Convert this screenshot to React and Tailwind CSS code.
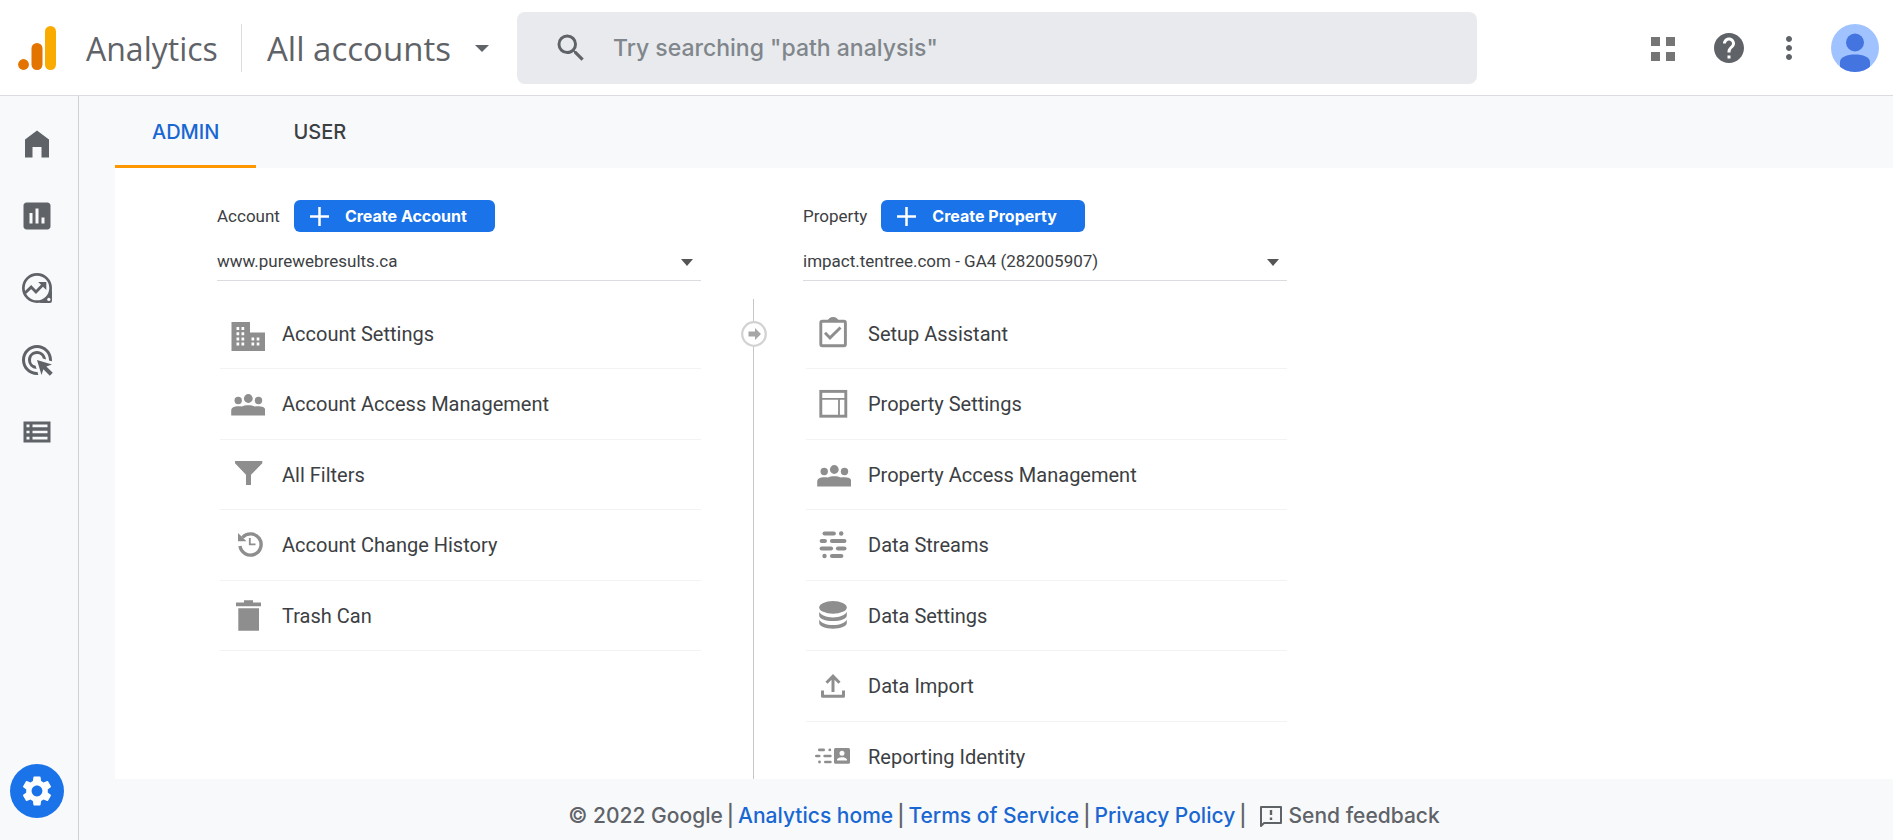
import React, { useState } from 'react';
import { MdAdsClick, MdHelp, MdInsertChart, MdMoreVert, MdSearch, MdSettings } from 'react-icons/md';

// --- Sidebar icons ---
const HomeIcon = () => (
  <svg className="size-9" viewBox="0 0 24 24" fill="currentColor">
    <path d="M4 9v12h5v-7h6v7h5V9l-8-6z" />
  </svg>
);

const ExploreIcon = () => (
  <svg className="size-9" viewBox="0 0 24 24" fill="none" stroke="currentColor">
    <path d="M22 12v8.5a1.5 1.5 0 0 1-1.5 1.5H12a12 12 0 0 0 10-10z" fill="currentColor" stroke="none" />
    <circle cx="12" cy="12" r="9.1" strokeWidth="1.8" />
    <path d="M4 15.3l4.1-3.9 3.2 3.3 4.8-5" strokeWidth="1.9" />
    <path d="M12.8 8h5.4v5.4z" fill="currentColor" stroke="none" />
    <circle cx="19.9" cy="19.6" r="1.1" fill="#f8f9fb" stroke="none" />
  </svg>
);

const ListIcon = () => (
  <svg className="size-9" viewBox="0 0 24 24" fill="currentColor" fillRule="evenodd">
    <path d="M3 5h18v14H3zM5 7v1.8h2V7zM5 11.1v1.8h2v-1.8zM5 15.2V17h2v-1.8zM9 7v1.8h10V7zM9 11.1v1.8h10v-1.8zM9 15.2V17h10v-1.8z" />
  </svg>
);

// --- Admin list icons, all drawn on a 36x36 box ---
const BuildingIcon = () => (
  <g transform="translate(2 6)">
    <path
      fillRule="evenodd"
      d="M.5 0H19v10.500h15V29H.5zM5.500 5v3h2.700V5zM10.500 5v3h2.700V5zM5.500 10.200v3h2.700v-3zM10.500 10.200v3h2.700v-3zM5.500 15.400v3h2.700v-3zM10.500 15.400v3h2.700v-3zM5.500 20.600v3h2.700v-3zM10.500 20.600v3h2.700v-3zM20.500 15.400v3h2.700v-3zM25.700 15.400v3h2.700v-3zM20.500 20.600v3h2.700v-3zM25.700 20.600v3h2.700v-3z"
    />
  </g>
);

const PeopleIcon = () => (
  <g transform="translate(2 8)">
    <circle cx="17.300" cy="4.500" r="4.400" />
    <circle cx="7.200" cy="6.500" r="3.700" />
    <circle cx="27.500" cy="6.500" r="3.700" />
    <path d="M.2 21.600v-5.200c0-2.900 3.300-4.200 7-4.200 1.500 0 2.500.1 3.700.4 1.500-.9 3.900-1.300 6.400-1.300s4.900.4 6.400 1.300c1.200-.3 2.300-.4 3.800-.4 3.700 0 7 1.300 7 4.200v5.200z" />
  </g>
);

const FunnelIcon = () => (
  <g transform="translate(6 4)">
    <path d="M0 0h27.300v2.200L16 13.800V24h-5V13.800L0 2.200z" />
  </g>
);

const HistoryIcon = () => (
  <g transform="translate(9 4)">
    <path d="M4.500 6.500A10.600 10.600 0 1 1 2 15" fill="none" stroke="currentColor" strokeWidth="3.400" />
    <path d="M0 2l8.500 8.300H0z" />
    <path d="M11.800 7v6.300h5.700" fill="none" stroke="currentColor" strokeWidth="1.800" />
  </g>
);

const TrashIcon = () => (
  <g transform="translate(7 2)">
    <path d="M0 2.500h8V.3h9v2.200h8v3.700H0zM2.300 8.300h20.700v22.400H2.300z" />
  </g>
);

const ClipboardIcon = () => (
  <g transform="translate(4 1)" fill="none" stroke="currentColor">
    <rect x="1.800" y="4.200" width="24.600" height="24.600" rx="1.500" strokeWidth="2.900" />
    <path d="M10 4.500a4.100 3 0 0 1 8.200 0" strokeWidth="2.900" />
    <path d="M6 15.700l5 5.200 10.500-10.400" strokeWidth="2.900" />
  </g>
);

const LayoutIcon = () => (
  <g transform="translate(4 4)" fill="none" stroke="currentColor">
    <rect x="1.800" y="1.400" width="25" height="24.800" strokeWidth="2.900" />
    <path d="M2 8.900h25M20 8.900V26" strokeWidth="1.800" />
  </g>
);

const StreamsIcon = () => (
  <g transform="translate(4 4)">
    <rect x="3.500" y=".4" width="13.400" height="4.200" rx="2.100" />
    <circle cx="22.200" cy="2.500" r="2.200" />
    <rect x=".6" y="7.900" width="7.400" height="4.200" rx="2.100" />
    <rect x="10.900" y="7.900" width="16.600" height="4.200" rx="2.100" />
    <rect x=".6" y="15.400" width="13.500" height="4.200" rx="2.100" />
    <rect x="16.900" y="15.400" width="10.600" height="4.200" rx="2.100" />
    <circle cx="5.500" cy="25" r="2.200" />
    <rect x="10.900" y="22.900" width="13.500" height="4.200" rx="2.100" />
  </g>
);

const DatabaseIcon = () => (
  <g transform="translate(4 3)">
    <ellipse cx="14" cy="6.400" rx="13.800" ry="6.300" />
    <path d="M.2 10.800c1.500 3.300 7 5.600 13.800 5.600s12.300-2.300 13.800-5.600v3.600c0 3.200-6.200 5.600-13.800 5.600S.2 17.600.2 14.400z" />
    <path d="M.2 18.400c1.500 3.300 7 5.600 13.800 5.600s12.300-2.300 13.800-5.600V22c0 3.200-6.200 5.700-13.800 5.700S.2 25.200.2 22z" />
  </g>
);

const ImportIcon = () => (
  <g transform="translate(6 6)" fill="none" stroke="currentColor" strokeWidth="3">
    <path d="M12 18V2.500M5.500 8.700L12 2.200l6.500 6.500" />
    <path d="M1.500 16.500v5.700h21v-5.700" strokeLinejoin="round" />
  </g>
);

const IdentityIcon = () => (
  <g transform="translate(0 9)">
    <rect x="3" y=".6" width="7" height="2.600" rx="1.300" />
    <circle cx="14.800" cy="1.900" r="1.400" />
    <rect x="0" y="6.700" width="5.500" height="2.600" rx="1.300" />
    <rect x="8.300" y="6.700" width="8.400" height="2.600" rx="1.300" />
    <circle cx="4.500" cy="14" r="1.400" />
    <rect x="9" y="12.700" width="7.700" height="2.600" rx="1.300" />
    <path
      fillRule="evenodd"
      d="M20.500 0h13a1.500 1.500 0 0 1 1.500 1.500v12.700a1.500 1.500 0 0 1-1.500 1.500h-13a1.500 1.500 0 0 1-1.500-1.500V1.500A1.500 1.500 0 0 1 20.500 0zM27 2.800a2.500 2.500 0 1 0 0 5 2.500 2.500 0 0 0 0-5zM22 12.600h10v-.8c0-1.800-3.300-2.600-5-2.600s-5 .8-5 2.600z"
    />
  </g>
);

const navItems = [
  { label: 'Home', icon: <HomeIcon /> },
  { label: 'Reports', icon: <MdInsertChart className="size-9" /> },
  { label: 'Explore', icon: <ExploreIcon /> },
  { label: 'Advertising', icon: <MdAdsClick className="size-9" /> },
  { label: 'Configure', icon: <ListIcon /> },
];

const accountItems = [
  { label: 'Account Settings', Icon: BuildingIcon },
  { label: 'Account Access Management', Icon: PeopleIcon },
  { label: 'All Filters', Icon: FunnelIcon },
  { label: 'Account Change History', Icon: HistoryIcon },
  { label: 'Trash Can', Icon: TrashIcon },
];

const propertyItems = [
  { label: 'Setup Assistant', Icon: ClipboardIcon },
  { label: 'Property Settings', Icon: LayoutIcon },
  { label: 'Property Access Management', Icon: PeopleIcon },
  { label: 'Data Streams', Icon: StreamsIcon },
  { label: 'Data Settings', Icon: DatabaseIcon },
  { label: 'Data Import', Icon: ImportIcon },
  { label: 'Reporting Identity', Icon: IdentityIcon },
];

function Header() {
  return (
    <header className="flex h-24 shrink-0 items-center border-b border-[#dadce0] bg-white pl-[18px] pr-[14px] text-[#5f6368]">
      <svg className="h-11 w-[38px] shrink-0" viewBox="0 0 38 44">
        <rect x="27" y="0" width="11" height="44" rx="5.500" fill="#f9ab00" />
        <rect x="13.500" y="17" width="11" height="27" rx="5.500" fill="#e37400" />
        <circle cx="5.500" cy="38.500" r="5.400" fill="#e37400" />
      </svg>
      <span className="ml-[30px] w-[155px] shrink-0 pt-0.5 font-['Open_Sans','Noto_Sans',sans-serif] text-[32px]">Analytics</span>
      <div className="h-12 w-px bg-[#dadce0]" />
      <button className="flex w-[275px] shrink-0 items-center gap-6 pl-[25px] pt-0.5 text-left font-['Open_Sans','Noto_Sans',sans-serif] text-[33px]">
        All accounts
        <svg className="h-[7px] w-[14px]" viewBox="0 0 14 7" fill="currentColor">
          <path d="M0 0h14L7 7z" />
        </svg>
      </button>

      <label className="flex h-[72px] min-w-0 max-w-[960px] flex-1 items-center gap-6 rounded-lg bg-[#e8eaed] pl-9">
        <MdSearch className="size-9 shrink-0" />
        <input
          type="text"
          aria-label="Search"
          placeholder={'Try searching "path analysis"'}
          className="min-w-0 flex-1 bg-transparent pt-0.5 text-[23px] font-medium placeholder-[#80868b] outline-none"
        />
      </label>

      <div className="ml-auto flex items-center gap-6 pl-6">
        <button aria-label="Apps" className="mr-[6px] text-[#757575]">
          <svg className="size-9" viewBox="0 0 36 36" fill="currentColor">
            <path d="M6 7h9v9H6zM21 7h9v9h-9zM6 22h9v9H6zM21 22h9v9h-9z" />
          </svg>
        </button>
        <button aria-label="Help">
          <MdHelp className="size-9" />
        </button>
        <button aria-label="More options">
          <MdMoreVert className="size-9" />
        </button>
        <button aria-label="Profile">
          <svg className="size-12" viewBox="0 0 48 48">
            <clipPath id="avatar">
              <circle cx="24" cy="24" r="24" />
            </clipPath>
            <g clipPath="url(#avatar)">
              <path d="M0 0h48v48H0z" fill="#a0c3ff" />
              <circle cx="24" cy="18.500" r="9" fill="#4374e0" />
              <path d="M9 48V38c0-5 7-7.500 15-7.500S39 33 39 38v10z" fill="#4374e0" />
            </g>
          </svg>
        </button>
      </div>
    </header>
  );
}

function Sidebar() {
  return (
    <nav className="flex w-[79px] shrink-0 flex-col items-center border-r border-[#cfd1d4] pb-[22px] pr-1 pt-[30px] text-[#5f6368]">
      <div className="flex flex-col gap-9">
        {navItems.map((item) => (
          <a key={item.label} href="#" aria-label={item.label}>
            {item.icon}
          </a>
        ))}
      </div>
      <button aria-label="Admin" className="mt-auto flex size-[54px] items-center justify-center rounded-full bg-[#1a73e8] text-white">
        <MdSettings className="size-9" />
      </button>
    </nav>
  );
}

function AdminColumn({ id, title, value, items }) {
  return (
    <section className="w-[484px] shrink">
      <div className="flex items-center gap-[14px]">
        <label htmlFor={id} className="pt-0.5 text-[17px] text-[#3c4043]">{title}</label>
        <button className="flex h-8 items-center gap-4 rounded-md bg-[#1a73e8] pl-4 pr-7 font-['Inter','Noto_Sans',sans-serif] text-base font-bold text-white">
          <svg className="size-[19px]" viewBox="0 0 19 19" fill="none" stroke="currentColor" strokeWidth="2.500">
            <path d="M9.500 0v19M0 9.500h19" />
          </svg>
          Create {title}
        </button>
      </div>

      <div className="relative mt-3 border-b border-[#dadce0]">
        <select id={id} className="h-9 w-full appearance-none bg-transparent text-[17px] text-[#3c4043] outline-none">
          <option>{value}</option>
        </select>
        <svg className="pointer-events-none absolute right-2 top-[15px] h-[7px] w-3 text-[#555]" viewBox="0 0 12 7" fill="currentColor">
          <path d="M0 0h12L6 7z" />
        </svg>
      </div>

      <ul className="mt-[18px] pl-[3px]">
        {items.map(({ label, Icon }) => (
          <li key={label} className="border-b border-[#f1f3f4] odd:h-[70px] even:h-[71px]">
            <a href="#" className="flex h-full items-center gap-2 text-xl text-[#3c4043]">
              <span className="flex w-[54px] shrink-0 justify-center text-[#8e8e8e]">
                <svg className="size-9" viewBox="0 0 36 36" fill="currentColor">
                  <Icon />
                </svg>
              </span>
              {label}
            </a>
          </li>
        ))}
      </ul>
    </section>
  );
}

function Footer() {
  return (
    <footer className="flex h-[61px] shrink-0 items-center justify-center gap-1 pt-3 text-[21px] font-medium text-[#5f6368]">
      <span>© 2022 Google</span>
      <span>|</span>
      <a href="#" className="text-[#1967d2]">Analytics home</a>
      <span>|</span>
      <a href="#" className="text-[#1967d2]">Terms of Service</a>
      <span>|</span>
      <a href="#" className="text-[#1967d2]">Privacy Policy</a>
      <span>|</span>
      <button className="ml-2 flex items-center gap-[6px]">
        <svg className="size-6" viewBox="0 0 24 24" fill="none" stroke="currentColor" strokeWidth="2">
          <path d="M2 22V3h20v16H5z" strokeLinejoin="round" />
          <path d="M12 6v5M12 13.500v2.500" strokeWidth="2.400" />
        </svg>
        Send feedback
      </button>
    </footer>
  );
}

export default function App() {
  const [tab, setTab] = useState('ADMIN');

  return (
    <div className="flex h-screen flex-col overflow-hidden bg-[#f8f9fb] font-['Inter','Noto_Sans',sans-serif]">
      <Header />
      <div className="flex min-h-0 flex-1">
        <Sidebar />
        <main className="flex min-w-0 flex-1 flex-col pl-9">
          {/* --- Tabs --- */}
          <div className="flex h-[72px] shrink-0">
            {['ADMIN', 'USER'].map((name) => (
              <button
                key={name}
                onClick={() => setTab(name)}
                className={`border-b-[3px] px-[37px] pt-0.5 text-xl font-medium ${
                  tab === name ? 'border-[#ff9800] text-[#1967d2]' : 'border-transparent text-[#3c4043]'
                }`}
              >
                {name}
              </button>
            ))}
          </div>

          {/* --- Account and property columns --- */}
          <div className="flex min-h-0 flex-1 overflow-hidden bg-white pl-[102px] pt-8 font-['Roboto','Noto_Sans',sans-serif]">
            <AdminColumn id="account" title="Account" value="www.purewebresults.ca" items={accountItems} />
            <div className="mt-[99px] flex w-[102px] shrink-0 flex-col items-center pl-[3px]">
              <div className="h-[22px] w-px shrink-0 bg-[#c4c7c9]" />
              <svg className="size-[26px] shrink-0" viewBox="0 0 26 26">
                <circle cx="13" cy="13" r="11.800" fill="#fff" stroke="#d2d2d2" strokeWidth="2.200" />
                <path d="M7.500 10.500h6.500V7l6 6-6 6v-3.500H7.500z" fill="#a6a6a6" />
              </svg>
              <div className="w-px flex-1 bg-[#c4c7c9]" />
            </div>
            <AdminColumn id="property" title="Property" value="impact.tentree.com - GA4 (282005907)" items={propertyItems} />
          </div>

          <Footer />
        </main>
      </div>
    </div>
  );
}
